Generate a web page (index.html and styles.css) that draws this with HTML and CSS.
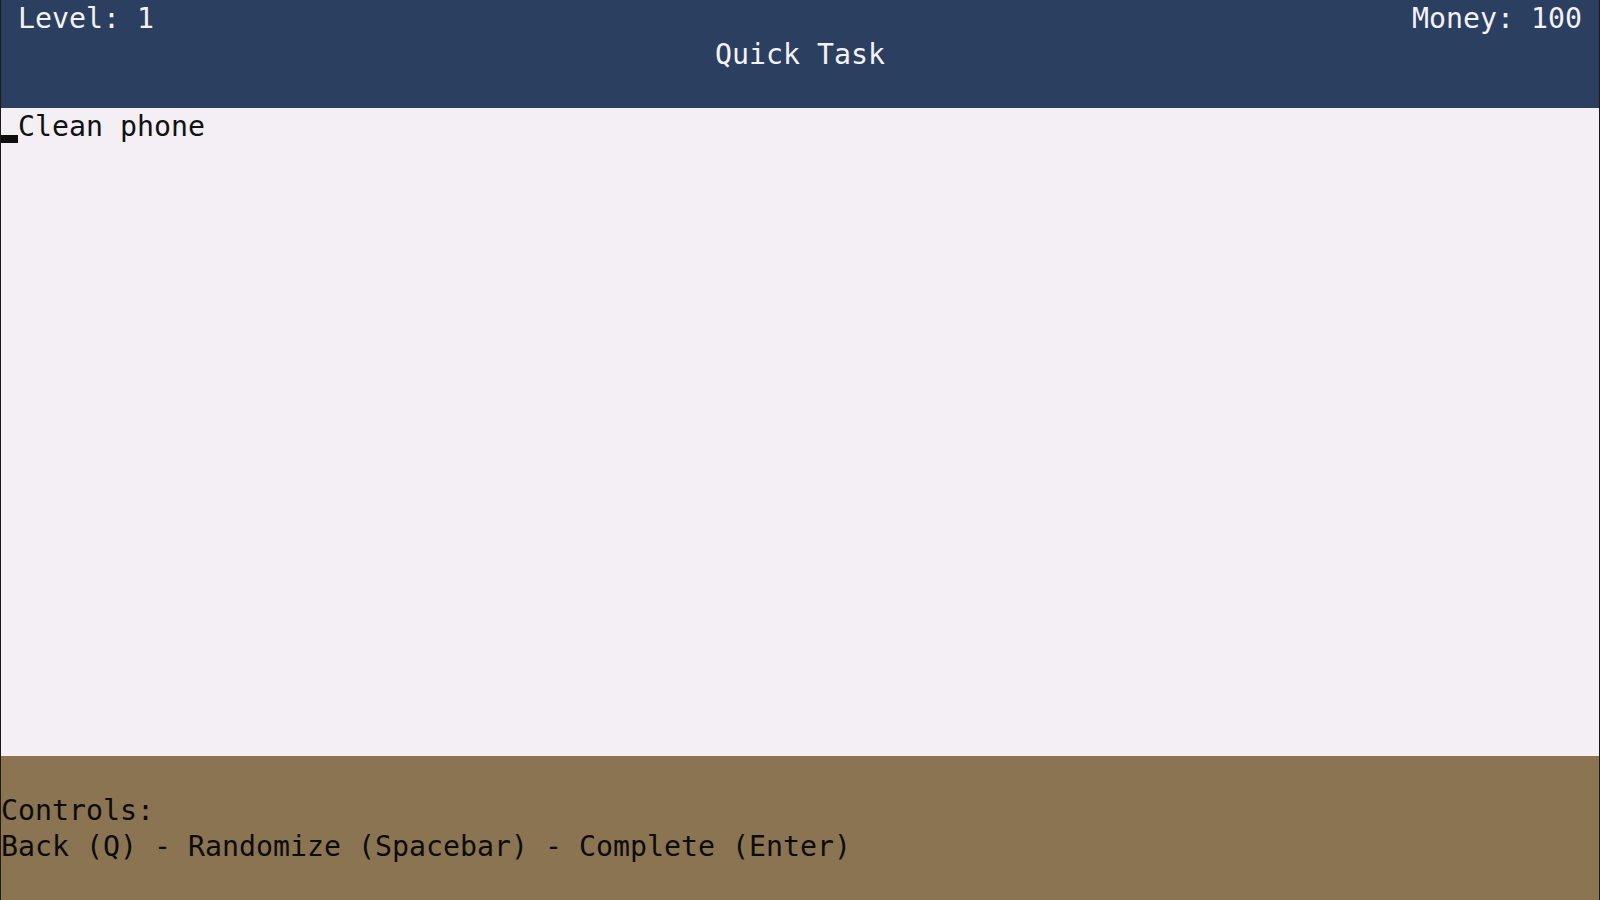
FILE: index.html
```html
<!DOCTYPE html>
<html>
<head>
<meta charset="utf-8">
<title>Quick Task</title>
<link rel="stylesheet" href="styles.css">
</head>
<body>
<div class="screen">
  <header class="header">
    <div class="row row-split"><span>Level: 1</span><span>Money: 100</span></div>
    <div class="row row-center">Quick Task</div>
    <div class="row"></div>
  </header>
  <main class="main">
    <div class="row task"><span class="cursor-cell"><span class="cursor"></span></span><span>Clean phone</span></div>
  </main>
  <footer class="footer">
    <div class="row"></div>
    <div class="row">Controls:</div>
    <div class="row">Back (Q) - Randomize (Spacebar) - Complete (Enter)</div>
    <div class="row"></div>
  </footer>
</div>
</body>
</html>
```
FILE: styles.css
```css
html, body {
  margin: 0;
  padding: 0;
  height: 100%;
}
body {
  background: #1c1a18;
  font-family: "DejaVu Sans Mono", "Liberation Mono", monospace;
  font-size: 28.24px;
  line-height: 34px;
  overflow: hidden;
}
.screen {
  margin: 0 1px;
  height: 900px;
  display: flex;
  flex-direction: column;
}
.row {
  height: 36px;
  padding-top: 2px;
  box-sizing: border-box;
  white-space: pre;
}
.header {
  background: #2b3f60;
  color: #f4f2f6;
  height: 108px;
}
.row-split {
  display: flex;
  justify-content: space-between;
  padding-left: 17px;
  padding-right: 17px;
}
.row-center {
  text-align: center;
}
.main {
  background: #f3eff5;
  color: #111;
  flex: 1;
}
.task {
  display: flex;
  padding-top: 0;
}
.task > span:last-child {
  padding-top: 2px;
}
.cursor-cell {
  width: 17px;
  height: 36px;
  display: flex;
  flex-direction: column;
  justify-content: flex-end;
  padding-bottom: 1px;
  box-sizing: border-box;
}
.cursor {
  display: block;
  height: 8px;
  background: #0e0e0c;
}
.footer {
  background: #8b7452;
  color: #0c0c0c;
  height: 144px;
}
```
